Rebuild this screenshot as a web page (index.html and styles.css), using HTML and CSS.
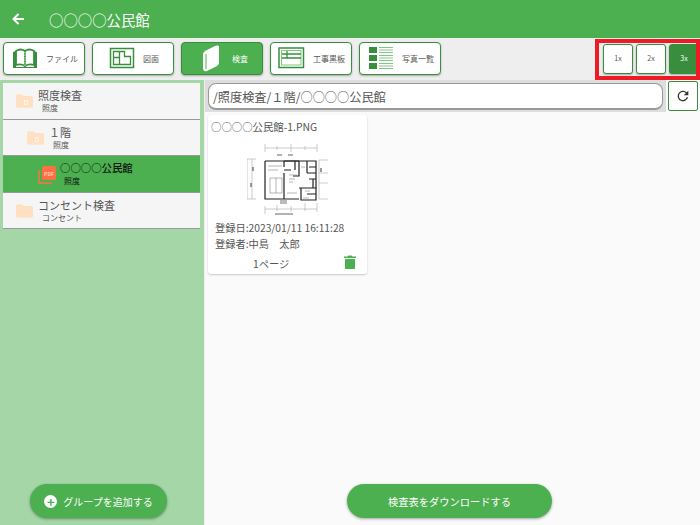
FILE: index.html
```html
<!DOCTYPE html>
<html lang="ja">
  <head>
    <meta charset="UTF-8" />
    <title>検査</title>
    <link rel="stylesheet" href="styles.css">
  </head>
  <body>
    <header class="app-bar">
      <svg class="back-icon" width="14" height="14" viewBox="0 0 14 14">
        <path d="M13 7H2.500M7.500 2 2.500 7l5 5" fill="none" stroke="#fff" stroke-width="2"/>
      </svg>
      <h1 class="app-title">○○○○公民館</h1>
    </header>

    <nav class="toolbar">
      <button class="tool-btn">
        <svg width="44" height="31" viewBox="0 0 44 31">
          <path d="M9 9l3-1v16h9v1H9zM33 9l-3-1v16h-9v1h12z" fill="#388e3c"/>
          <path d="M12 8c3-2 6-2 9 0v15c-3-2-6-2-9-1zM21 8c3-2 6-2 9 0v14c-3-1-6-1-9 1z" fill="#fff" stroke="#388e3c" stroke-width="1.800"/>
          <path d="M21 9v14" stroke="#81c784" stroke-width="2" stroke-dasharray="1.500 1"/>
        </svg>
        <span>ファイル</span>
      </button>
      <button class="tool-btn">
        <svg width="44" height="31" viewBox="0 0 44 31">
          <rect x="17.500" y="5.500" width="23" height="19" fill="none" stroke="#388e3c" stroke-width="1.500"/>
          <path d="M20.500 8.500h6v13h-6zM20.500 14.500h6M26.500 8.500h5v5h6v8h-11" fill="none" stroke="#388e3c" stroke-width="1.300"/>
        </svg>
        <span>図面</span>
      </button>
      <button class="tool-btn is-active">
        <svg width="44" height="31" viewBox="0 0 44 31">
          <path d="M21 11c0-1 1-2 2-3l10-5c1-.5 4-1 4 1v16c0 1-1 2-2 3l-10 5c-3 1-4-1-4-3z" fill="#fff"/>
          <path d="M24 11v15" stroke="#4caf50" stroke-width="1"/>
        </svg>
        <span>検査</span>
      </button>
      <button class="tool-btn">
        <svg width="44" height="31" viewBox="0 0 44 31">
          <rect x="8" y="5" width="24.500" height="19.500" fill="none" stroke="#388e3c" stroke-width="1.500"/>
          <rect x="10.500" y="7.500" width="19.500" height="14.500" fill="none" stroke="#81c784" stroke-width="1"/>
          <path d="M11 11h19M11 15h19M16 8v7" stroke="#388e3c" stroke-width="1.300"/>
        </svg>
        <span>工事黒板</span>
      </button>
      <button class="tool-btn">
        <svg width="44" height="31" viewBox="0 0 44 31">
          <path d="M9 4h8v6H9zM9 12h8v6H9zM9 20h8v6H9z" fill="#388e3c"/>
          <path d="M19 4.500h14M19 7h14M19 9.500h14M19 12.500h14M19 15h14M19 17.500h14M19 20.500h14M19 23h14M19 25.500h14" stroke="#81c784" stroke-width="1"/>
        </svg>
        <span>写真一覧</span>
      </button>
      <div class="scale-group">
        <button class="scale-btn">1x</button>
        <button class="scale-btn">2x</button>
        <button class="scale-btn is-active">3x</button>
      </div>
      <div class="highlight"></div>
    </nav>

    <div class="workspace">
      <aside class="sidebar">
        <ul class="tree">
          <li class="tree-item">
            <svg class="folder" width="17" height="14" viewBox="0 0 20 16"><path d="M0 2c0-1 1-2 2-2h5l2 2h9c1 0 2 1 2 2v10c0 1-1 2-2 2H2c-1 0-2-1-2-2z" fill="#ffe0c2"/><text x="12" y="13" class="folder-mark">D</text></svg>
            <div><p class="tree-name">照度検査</p><p class="tree-sub">照度</p></div>
          </li>
          <li class="tree-item depth-1">
            <svg class="folder" width="17" height="14" viewBox="0 0 20 16"><path d="M0 2c0-1 1-2 2-2h5l2 2h9c1 0 2 1 2 2v10c0 1-1 2-2 2H2c-1 0-2-1-2-2z" fill="#ffe0c2"/><text x="12" y="13" class="folder-mark">D</text></svg>
            <div><p class="tree-name">１階</p><p class="tree-sub">照度</p></div>
          </li>
          <li class="tree-item depth-2 is-selected">
            <svg class="pdf" width="18" height="18" viewBox="0 0 18 18">
              <path d="M1 4v13h13" fill="none" stroke="#ff7043" stroke-width="1.500"/>
              <rect x="4" y="0" width="14" height="14" rx="1.500" fill="#ff7043"/>
              <text x="11" y="9.500" class="pdf-mark">PDF</text>
            </svg>
            <div><p class="tree-name">○○○○公民館</p><p class="tree-sub">照度</p></div>
          </li>
          <li class="tree-item">
            <svg class="folder" width="17" height="14" viewBox="0 0 20 16"><path d="M0 2c0-1 1-2 2-2h5l2 2h9c1 0 2 1 2 2v10c0 1-1 2-2 2H2c-1 0-2-1-2-2z" fill="#ffe0c2"/></svg>
            <div><p class="tree-name">コンセント検査</p><p class="tree-sub">コンセント</p></div>
          </li>
        </ul>
        <button class="pill-btn add-group">
          <span class="plus-badge">+</span>グループを追加する
        </button>
      </aside>

      <main class="content">
        <div class="path-row">
          <div class="path-wrap">
            <div class="path-box">/照度検査/１階/○○○○公民館</div>
          </div>
          <button class="refresh-btn">
            <svg width="16" height="16" viewBox="0 0 24 24">
              <path d="M17.650 6.350A8 8 0 1 0 19.730 14h-2.080A6 6 0 1 1 12 6c1.660 0 3.140.69 4.220 1.780L13 11h7V4z" fill="#333"/>
            </svg>
          </button>
        </div>

        <div class="card-grid">
          <article class="card">
            <p class="card-title">○○○○公民館-1.PNG</p>
            <svg class="plan" width="81" height="75" viewBox="0 0 81 75">
              <g fill="none" stroke="#aaa" stroke-width="0.600">
                <path d="M18 5h52M18 1v8M30 3v4M44 1v8M58 3v4M70 1v8M18 66h52M18 63v8M30 62v6M44 63v6M58 60v8M70 60v9"/>
                <path d="M0 16v40M5 16v40M0 16h9M0 56h9M72 17h9M72 30h9M72 40h9M72 56h9M72 17v39"/>
              </g>
              <path d="M30 12h5M41 12h5M28 71h18" stroke="#999" stroke-width="1.500"/>
              <path d="M6 24v4M4 40v4M74 25v4" stroke="#777" stroke-width="1.500"/>
              <g fill="none" stroke="#222" stroke-width="1.200">
                <path d="M18 18h51v27M18 18v38h34M37 18v6M37 30v26"/>
                <path d="M37 18h15M48 18v9M37 27h7M52 18v15h-6M60 18v12M60 30h9M62 36h7M52 45h17v12H54V45"/>
                <path d="M62 24h7M66 36v9M60 51h9"/>
              </g>
              <g fill="none" stroke="#888" stroke-width="0.600">
                <path d="M23 35h12v15H23zM29 35v15M21 23h14M21 27h10M42 36h6M46 39h-4M40 50h10M58 48h5M56 55h6M54 24h4M42 32h8"/>
              </g>
              <rect x="33" y="57" width="7" height="4" fill="#bbb"/>
            </svg>
            <p class="card-meta">登録日:2023/01/11 16:11:28</p>
            <p class="card-meta">登録者:中島　太郎</p>
            <div class="card-foot">
              <span class="page-count">1ページ</span>
              <svg class="trash" width="12" height="14" viewBox="0 0 12 14">
                <path d="M1 4h10v9c0 .6-.4 1-1 1H2c-.6 0-1-.4-1-1zM0 1.500h3.500L4.500.5h3l1 1H12V3H0z" fill="#4caf50"/>
              </svg>
            </div>
          </article>
        </div>

        <button class="pill-btn download">検査表をダウンロードする</button>
      </main>
    </div>
  </body>
</html>
```

FILE: styles.css
```css
* {
  box-sizing: border-box;
}

body {
  font-family: "Noto Sans CJK JP", "Noto Sans", sans-serif;
  margin: 0;
  width: 700px;
  height: 525px;
  overflow: hidden;
  display: flex;
  flex-direction: column;
  background-color: #fafafa;
  color: #555;
}

p {
  margin: 0;
}

button {
  font-family: inherit;
  cursor: pointer;
}

.app-bar {
  height: 38px;
  flex: none;
  display: flex;
  align-items: center;
  padding-left: 11px;
  background-color: #4caf50;
  box-shadow: 0 1px 3px rgba(0, 0, 0, 0.3);
  position: relative;
}

.back-icon {
  margin-top: -1px;
}

.app-title {
  margin: 0 0 0 24px;
  font-size: 14.400px;
  font-weight: 400;
  color: #fff;
}

.toolbar {
  height: 42px;
  flex: none;
  display: flex;
  align-items: flex-start;
  gap: 7px;
  padding: 4px 0 0 3px;
  background-color: #eee;
  position: relative;
}

.tool-btn {
  width: 82px;
  height: 33px;
  display: flex;
  align-items: center;
  padding: 0;
  border: 1px solid #388e3c;
  border-radius: 4px;
  background-color: #fff;
  box-shadow: 0 1px 2px rgba(0, 0, 0, 0.3);
  color: #555;
  font-size: 8px;
}

.tool-btn span {
  flex: none;
  width: 40px;
  text-align: center;
  white-space: nowrap;
}

.tool-btn svg {
  flex: none;
  margin-right: -6px;
}

.tool-btn.is-active {
  background-color: #4caf50;
  color: #fff;
}

.scale-group {
  margin-left: auto;
  margin-top: 2px;
  margin-right: 1px;
  display: flex;
  gap: 3px;
}

.scale-btn {
  width: 30px;
  height: 30px;
  padding: 0 0 2px;
  border: 1px solid #388e3c;
  border-radius: 3px;
  background-color: #fff;
  box-shadow: 0 1px 2px rgba(0, 0, 0, 0.3);
  color: #555;
  font-size: 7px;
}

.scale-btn.is-active {
  background-color: #388e3c;
  color: #fff;
}

.highlight {
  position: absolute;
  left: 595px;
  top: 1px;
  width: 105px;
  height: 41px;
  border: 4px solid #ed1c24;
}

.workspace {
  flex: 1;
  min-height: 0;
  display: flex;
}

.sidebar {
  width: 205px;
  flex: none;
  display: flex;
  flex-direction: column;
  padding: 3px 4px 7px 3px;
  background-color: #a5d6a7;
  border-right: 1px solid #eee;
}

.tree {
  list-style: none;
  margin: 0;
  padding: 0;
}

.tree-item {
  height: 36.500px;
  display: flex;
  align-items: center;
  gap: 5px;
  padding: 1px 0 0 13px;
  background-color: #f5f5f5;
  border-bottom: 1px solid #999;
}

.tree-item.depth-1 {
  padding-left: 24px;
}

.tree-item.depth-2 {
  padding-left: 33px;
  gap: 4px;
}

.tree-item.is-selected {
  background-color: #4caf50;
  color: #111;
}

.folder {
  flex: none;
}

.folder-mark {
  font-size: 8px;
  fill: #fff;
  text-anchor: middle;
}

.pdf {
  flex: none;
  margin-top: 1px;
  margin-left: 2px;
}

.pdf-mark {
  font-size: 5px;
  font-weight: 700;
  fill: #ffccbc;
  text-anchor: middle;
}

.tree-name {
  font-size: 11px;
  line-height: 14px;
}

.is-selected .tree-name {
  font-size: 10.400px;
  font-weight: 500;
}

.tree-sub {
  font-size: 8px;
  line-height: 12px;
  padding-left: 4px;
}

.pill-btn {
  height: 34px;
  display: flex;
  align-items: center;
  justify-content: center;
  border: none;
  border-radius: 17px;
  background-color: #4caf50;
  box-shadow: 0 1px 3px rgba(0, 0, 0, 0.35);
  color: #fff;
  font-size: 10px;
}

.add-group {
  width: 137px;
  margin: auto 0 0 27px;
  gap: 6px;
}

.plus-badge {
  width: 13px;
  height: 13px;
  border-radius: 50%;
  background-color: #fff;
  color: #4caf50;
  font-size: 13px;
  font-weight: 700;
  line-height: 13px;
  text-align: center;
}

.content {
  flex: 1;
  min-width: 0;
  display: flex;
  flex-direction: column;
  padding: 0 2px 7px 0;
}

.path-row {
  display: flex;
  align-items: center;
  gap: 2px;
  height: 32px;
  flex: none;
}

.path-wrap {
  flex: 1;
  align-self: stretch;
  padding: 3px 3px 0;
  background-color: #ddd;
}

.path-box {
  height: 27px;
  padding-left: 4px;
  border: 1px solid #999;
  border-bottom-width: 2px;
  border-radius: 8px;
  background-color: #fff;
  font-size: 12.200px;
  line-height: 26px;
  white-space: nowrap;
}

.refresh-btn {
  width: 30px;
  height: 30px;
  display: flex;
  align-items: center;
  justify-content: center;
  padding: 0;
  border: 1.500px solid #388e3c;
  border-radius: 2px;
  background-color: #fff;
}

.card-grid {
  flex: 1;
  padding: 3px 0 0 3px;
}

.card {
  width: 159px;
  height: 159px;
  padding: 5px 7px 0;
  border-radius: 3px;
  background-color: #fff;
  box-shadow: 0 1px 2px rgba(0, 0, 0, 0.2);
  font-size: 10.250px;
}

.card-title {
  margin-left: -4px;
  font-size: 10.400px;
  line-height: 14px;
  white-space: nowrap;
}

.plan {
  display: block;
  margin: 9px 0 2px 32px;
}

.card-meta {
  line-height: 16px;
  white-space: nowrap;
}

.card-foot {
  display: flex;
  align-items: center;
  justify-content: space-between;
  height: 20px;
  padding-right: 4px;
}

.page-count {
  margin: 3px 0 0 38px;
  font-size: 10.250px;
}

.download {
  width: 205px;
  margin-left: 142px;
  flex: none;
  font-size: 10.250px;
}
```
